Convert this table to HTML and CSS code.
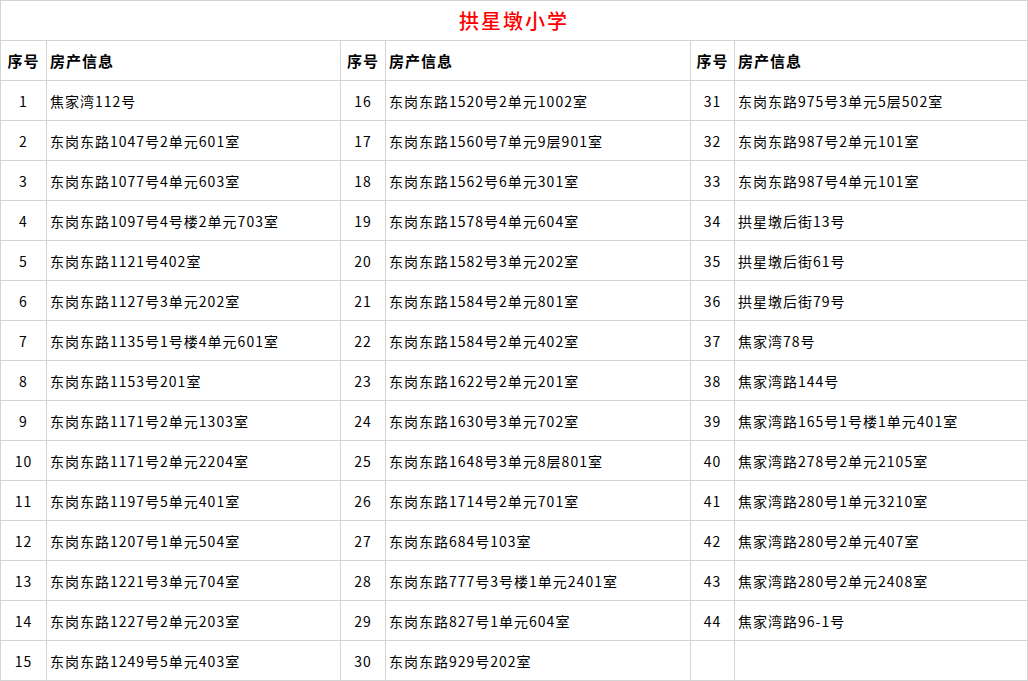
FILE: index.html
```html
<!DOCTYPE html>
<html lang="zh-CN">
<head>
<meta charset="utf-8">
<title>拱星墩小学</title>
<link rel="stylesheet" href="styles.css">
</head>
<body>
<div class="sheet">
  <div class="cell title">拱星墩小学</div>

  <div class="cell head num">序号</div><div class="cell head">房产信息</div>
  <div class="cell head num">序号</div><div class="cell head">房产信息</div>
  <div class="cell head num">序号</div><div class="cell head">房产信息</div>

  <div class="cell num">1</div><div class="cell">焦家湾112号</div>
  <div class="cell num">16</div><div class="cell">东岗东路1520号2单元1002室</div>
  <div class="cell num">31</div><div class="cell">东岗东路975号3单元5层502室</div>

  <div class="cell num">2</div><div class="cell">东岗东路1047号2单元601室</div>
  <div class="cell num">17</div><div class="cell">东岗东路1560号7单元9层901室</div>
  <div class="cell num">32</div><div class="cell">东岗东路987号2单元101室</div>

  <div class="cell num">3</div><div class="cell">东岗东路1077号4单元603室</div>
  <div class="cell num">18</div><div class="cell">东岗东路1562号6单元301室</div>
  <div class="cell num">33</div><div class="cell">东岗东路987号4单元101室</div>

  <div class="cell num">4</div><div class="cell">东岗东路1097号4号楼2单元703室</div>
  <div class="cell num">19</div><div class="cell">东岗东路1578号4单元604室</div>
  <div class="cell num">34</div><div class="cell">拱星墩后街13号</div>

  <div class="cell num">5</div><div class="cell">东岗东路1121号402室</div>
  <div class="cell num">20</div><div class="cell">东岗东路1582号3单元202室</div>
  <div class="cell num">35</div><div class="cell">拱星墩后街61号</div>

  <div class="cell num">6</div><div class="cell">东岗东路1127号3单元202室</div>
  <div class="cell num">21</div><div class="cell">东岗东路1584号2单元801室</div>
  <div class="cell num">36</div><div class="cell">拱星墩后街79号</div>

  <div class="cell num">7</div><div class="cell">东岗东路1135号1号楼4单元601室</div>
  <div class="cell num">22</div><div class="cell">东岗东路1584号2单元402室</div>
  <div class="cell num">37</div><div class="cell">焦家湾78号</div>

  <div class="cell num">8</div><div class="cell">东岗东路1153号201室</div>
  <div class="cell num">23</div><div class="cell">东岗东路1622号2单元201室</div>
  <div class="cell num">38</div><div class="cell">焦家湾路144号</div>

  <div class="cell num">9</div><div class="cell">东岗东路1171号2单元1303室</div>
  <div class="cell num">24</div><div class="cell">东岗东路1630号3单元702室</div>
  <div class="cell num">39</div><div class="cell">焦家湾路165号1号楼1单元401室</div>

  <div class="cell num">10</div><div class="cell">东岗东路1171号2单元2204室</div>
  <div class="cell num">25</div><div class="cell">东岗东路1648号3单元8层801室</div>
  <div class="cell num">40</div><div class="cell">焦家湾路278号2单元2105室</div>

  <div class="cell num">11</div><div class="cell">东岗东路1197号5单元401室</div>
  <div class="cell num">26</div><div class="cell">东岗东路1714号2单元701室</div>
  <div class="cell num">41</div><div class="cell">焦家湾路280号1单元3210室</div>

  <div class="cell num">12</div><div class="cell">东岗东路1207号1单元504室</div>
  <div class="cell num">27</div><div class="cell">东岗东路684号103室</div>
  <div class="cell num">42</div><div class="cell">焦家湾路280号2单元407室</div>

  <div class="cell num">13</div><div class="cell">东岗东路1221号3单元704室</div>
  <div class="cell num">28</div><div class="cell">东岗东路777号3号楼1单元2401室</div>
  <div class="cell num">43</div><div class="cell">焦家湾路280号2单元2408室</div>

  <div class="cell num">14</div><div class="cell">东岗东路1227号2单元203室</div>
  <div class="cell num">29</div><div class="cell">东岗东路827号1单元604室</div>
  <div class="cell num">44</div><div class="cell">焦家湾路96-1号</div>

  <div class="cell num">15</div><div class="cell">东岗东路1249号5单元403室</div>
  <div class="cell num">30</div><div class="cell">东岗东路929号202室</div>
  <div class="cell num"></div><div class="cell"></div>
</div>
</body>
</html>
```
FILE: styles.css
```css
html, body {
  margin: 0;
  padding: 0;
  background: #ffffff;
}

body {
  font-family: "Noto Sans CJK SC", "Noto Sans", sans-serif;
  color: #000000;
}

.sheet {
  display: grid;
  grid-template-columns: 45px 293px 44px 304px 43px 292px;
  grid-auto-rows: 39px;
  gap: 1px;
  padding: 1px;
  width: 1028px;
  box-sizing: border-box;
  background: #d4d4d4;
}

.cell {
  background: #ffffff;
  display: flex;
  align-items: center;
  padding-left: 3px;
  font-size: 14px;
  letter-spacing: 1px;
  white-space: nowrap;
  overflow: hidden;
}

.num {
  justify-content: center;
  padding-left: 0;
}

.head {
  font-weight: 700;
  font-size: 15px;
}

.title {
  grid-column: 1 / -1;
  justify-content: center;
  padding-left: 0;
  color: #ff0000;
  font-size: 20px;
  letter-spacing: 2px;
  font-weight: 500;
}
```
